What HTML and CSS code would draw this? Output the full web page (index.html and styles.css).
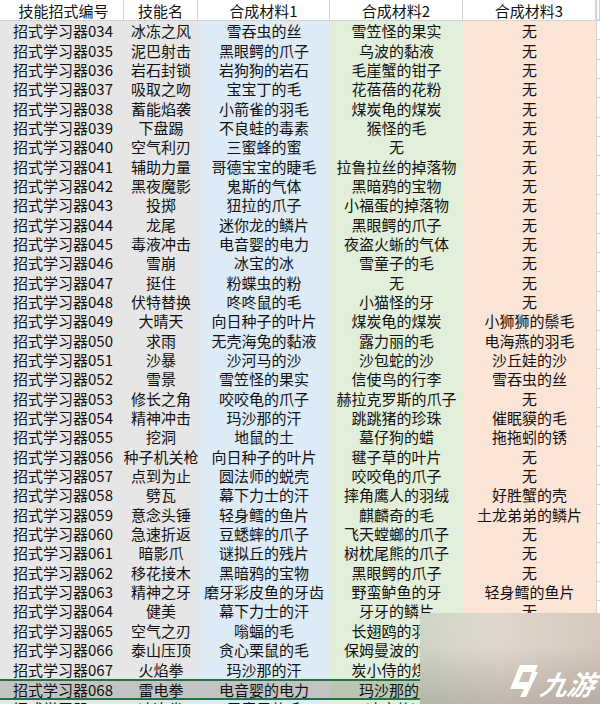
FILE: index.html
```html
<!DOCTYPE html>
<html lang="zh">
<head>
<meta charset="utf-8">
<link rel="stylesheet" href="styles.css">
</head>
<body>
<div class="sheet">
  <div class="row head">
    <div class="c">技能招式编号</div><div class="c">技能名</div><div class="c">合成材料1</div><div class="c">合成材料2</div><div class="c">合成材料3</div><div class="c e"></div>
  </div>
  <div id="rows"></div>
</div>
<div class="mark">
  <svg class="logo" viewBox="0 0 30 36" width="30" height="36">
    <polygon points="11,2 29,2 26,9 8,9" fill="#fff"/>
    <polygon points="8,9 14,9 10,19 4,19" fill="#fff"/>
    <polygon points="4,19 20,19 17,26 1,26" fill="#fff"/>
    <polygon points="23,9 29,9 17,34 11,34 15,26 17,26" fill="#fff"/>
  </svg>
  <span class="brand">九游</span>
</div>
<script src="app.js"></script>
</body>
</html>
```
FILE: app.js
```js
const data = [
["034","冰冻之风","雪吞虫的丝","雪笠怪的果实","无"],
["035","泥巴射击","黑眼鳄的爪子","乌波的黏液","无"],
["036","岩石封锁","岩狗狗的岩石","毛崖蟹的钳子","无"],
["037","吸取之吻","宝宝丁的毛","花蓓蓓的花粉","无"],
["038","蓄能焰袭","小箭雀的羽毛","煤炭龟的煤炭","无"],
["039","下盘踢","不良蛙的毒素","猴怪的毛","无"],
["040","空气利刃","三蜜蜂的蜜","无","无"],
["041","辅助力量","哥德宝宝的睫毛","拉鲁拉丝的掉落物","无"],
["042","黑夜魔影","鬼斯的气体","黑暗鸦的宝物","无"],
["043","投掷","狃拉的爪子","小福蛋的掉落物","无"],
["044","龙尾","迷你龙的鳞片","黑眼鳄的爪子","无"],
["045","毒液冲击","电音婴的电力","夜盗火蜥的气体","无"],
["046","雪崩","冰宝的冰","雪童子的毛","无"],
["047","挺住","粉蝶虫的粉","无","无"],
["048","伏特替换","咚咚鼠的毛","小猫怪的牙","无"],
["049","大晴天","向日种子的叶片","煤炭龟的煤炭","小狮狮的鬃毛"],
["050","求雨","无壳海兔的黏液","露力丽的毛","电海燕的羽毛"],
["051","沙暴","沙河马的沙","沙包蛇的沙","沙丘娃的沙"],
["052","雪景","雪笠怪的果实","信使鸟的行李","雪吞虫的丝"],
["053","修长之角","咬咬龟的爪子","赫拉克罗斯的爪子","无"],
["054","精神冲击","玛沙那的汗","跳跳猪的珍珠","催眠貘的毛"],
["055","挖洞","地鼠的土","墓仔狗的蜡","拖拖蚓的锈"],
["056","种子机关枪","向日种子的叶片","毽子草的叶片","无"],
["057","点到为止","圆法师的蜕壳","咬咬龟的爪子","无"],
["058","劈瓦","幕下力士的汗","摔角鹰人的羽绒","好胜蟹的壳"],
["059","意念头锤","轻身鳕的鱼片","麒麟奇的毛","土龙弟弟的鳞片"],
["060","急速折返","豆蟋蟀的爪子","飞天螳螂的爪子","无"],
["061","暗影爪","谜拟丘的残片","树枕尾熊的爪子","无"],
["062","移花接木","黑暗鸦的宝物","黑眼鳄的爪子","无"],
["063","精神之牙","磨牙彩皮鱼的牙齿","野蛮鲈鱼的牙","轻身鳕的鱼片"],
["064","健美","幕下力士的汗","牙牙的鳞片","无"],
["065","空气之刃","嗡蝠的毛","长翅鸥的羽毛","无"],
["066","泰山压顶","贪心栗鼠的毛","保姆曼波的鳞片","无"],
["067","火焰拳","玛沙那的汗","炭小侍的煤炭","无"],
["068","雷电拳","电音婴的电力","玛沙那的汗","无"],
["069","冰冻拳","雪童子的毛","冰宝的冰","无"]
];
const host = document.getElementById("rows");
data.forEach(r => {
  const row = document.createElement("div");
  row.className = "row" + (r[0] === "068" ? " sel" : "") + (r[0] === "069" ? " last" : "");
  row.innerHTML =
    '<div class="c k1">招式学习器' + r[0] + '</div>' +
    '<div class="c k2">' + r[1] + '</div>' +
    '<div class="c m1">' + r[2] + '</div>' +
    '<div class="c m2">' + r[3] + '</div>' +
    '<div class="c m3">' + r[4] + '</div>' +
    '<div class="c e"></div>';
  host.appendChild(row);
});
```
FILE: styles.css
```css
html, body {
  margin: 0;
  padding: 0;
  width: 600px;
  height: 704px;
  overflow: hidden;
  background: #fff;
}
.sheet {
  font-family: "Noto Sans CJK SC", "Liberation Sans", sans-serif;
  font-size: 15px;
  color: #111;
}
.row {
  display: grid;
  grid-template-columns: 124px 74px 132px 133px 133px 4px;
  height: 19.35px;
}
.c {
  display: flex;
  align-items: center;
  justify-content: center;
  white-space: nowrap;
  overflow: visible;
  line-height: 1;
  box-sizing: border-box;
}
.head {
  height: 21px;
  background: #fff;
  border-bottom: 1px solid #d4d4d4;
  box-sizing: border-box;
}
.head .c {
  border-right: 1px solid #d4d4d4;
}
.head .c:first-child { padding-left: 4px; }
.k1 { background: #e7e6e6; padding-left: 2px; }
.k2 { background: #e7e6e6; }
.m1 { background: #ddebf7; }
.m2 { background: #e2efda; }
.m3 { background: #fce4d6; }
.e {
  background: #fff;
  border-left: 1px solid #d4d4d4;
  border-bottom: 1px solid #d4d4d4;
}
.sel {
  border-top: 2px solid #217346;
  border-bottom: 2px solid #217346;
  height: 21px;
  box-sizing: border-box;
}
.sel .k1, .sel .k2, .sel .m1 { background: #c3c3c3; }
.sel .m2 { background: #b9c6b2; }
.sel .m3 { background: #c9bdb5; }
.last .c { align-items: flex-start; padding-top: 1px; }
.mark {
  position: absolute;
  left: 420px;
  top: 613px;
  width: 180px;
  height: 91px;
  backdrop-filter: blur(10px);
  background:
    linear-gradient(180deg, rgba(255,255,255,0) 35%, rgba(110,100,92,0.28) 100%),
    linear-gradient(90deg, rgba(206,214,198,0.97) 0%, rgba(224,214,203,0.97) 45%, rgba(212,198,188,0.97) 100%);
  display: flex;
  align-items: flex-end;
  padding: 0 0 5px 89px;
  box-sizing: border-box;
  gap: 2px;
}
.logo { display: block; }
.brand {
  font-family: "Noto Sans CJK SC", sans-serif;
  font-weight: 700;
  font-style: italic;
  font-size: 27px;
  line-height: 30px;
  color: #fff;
  transform: skewX(-12deg);
}
```
